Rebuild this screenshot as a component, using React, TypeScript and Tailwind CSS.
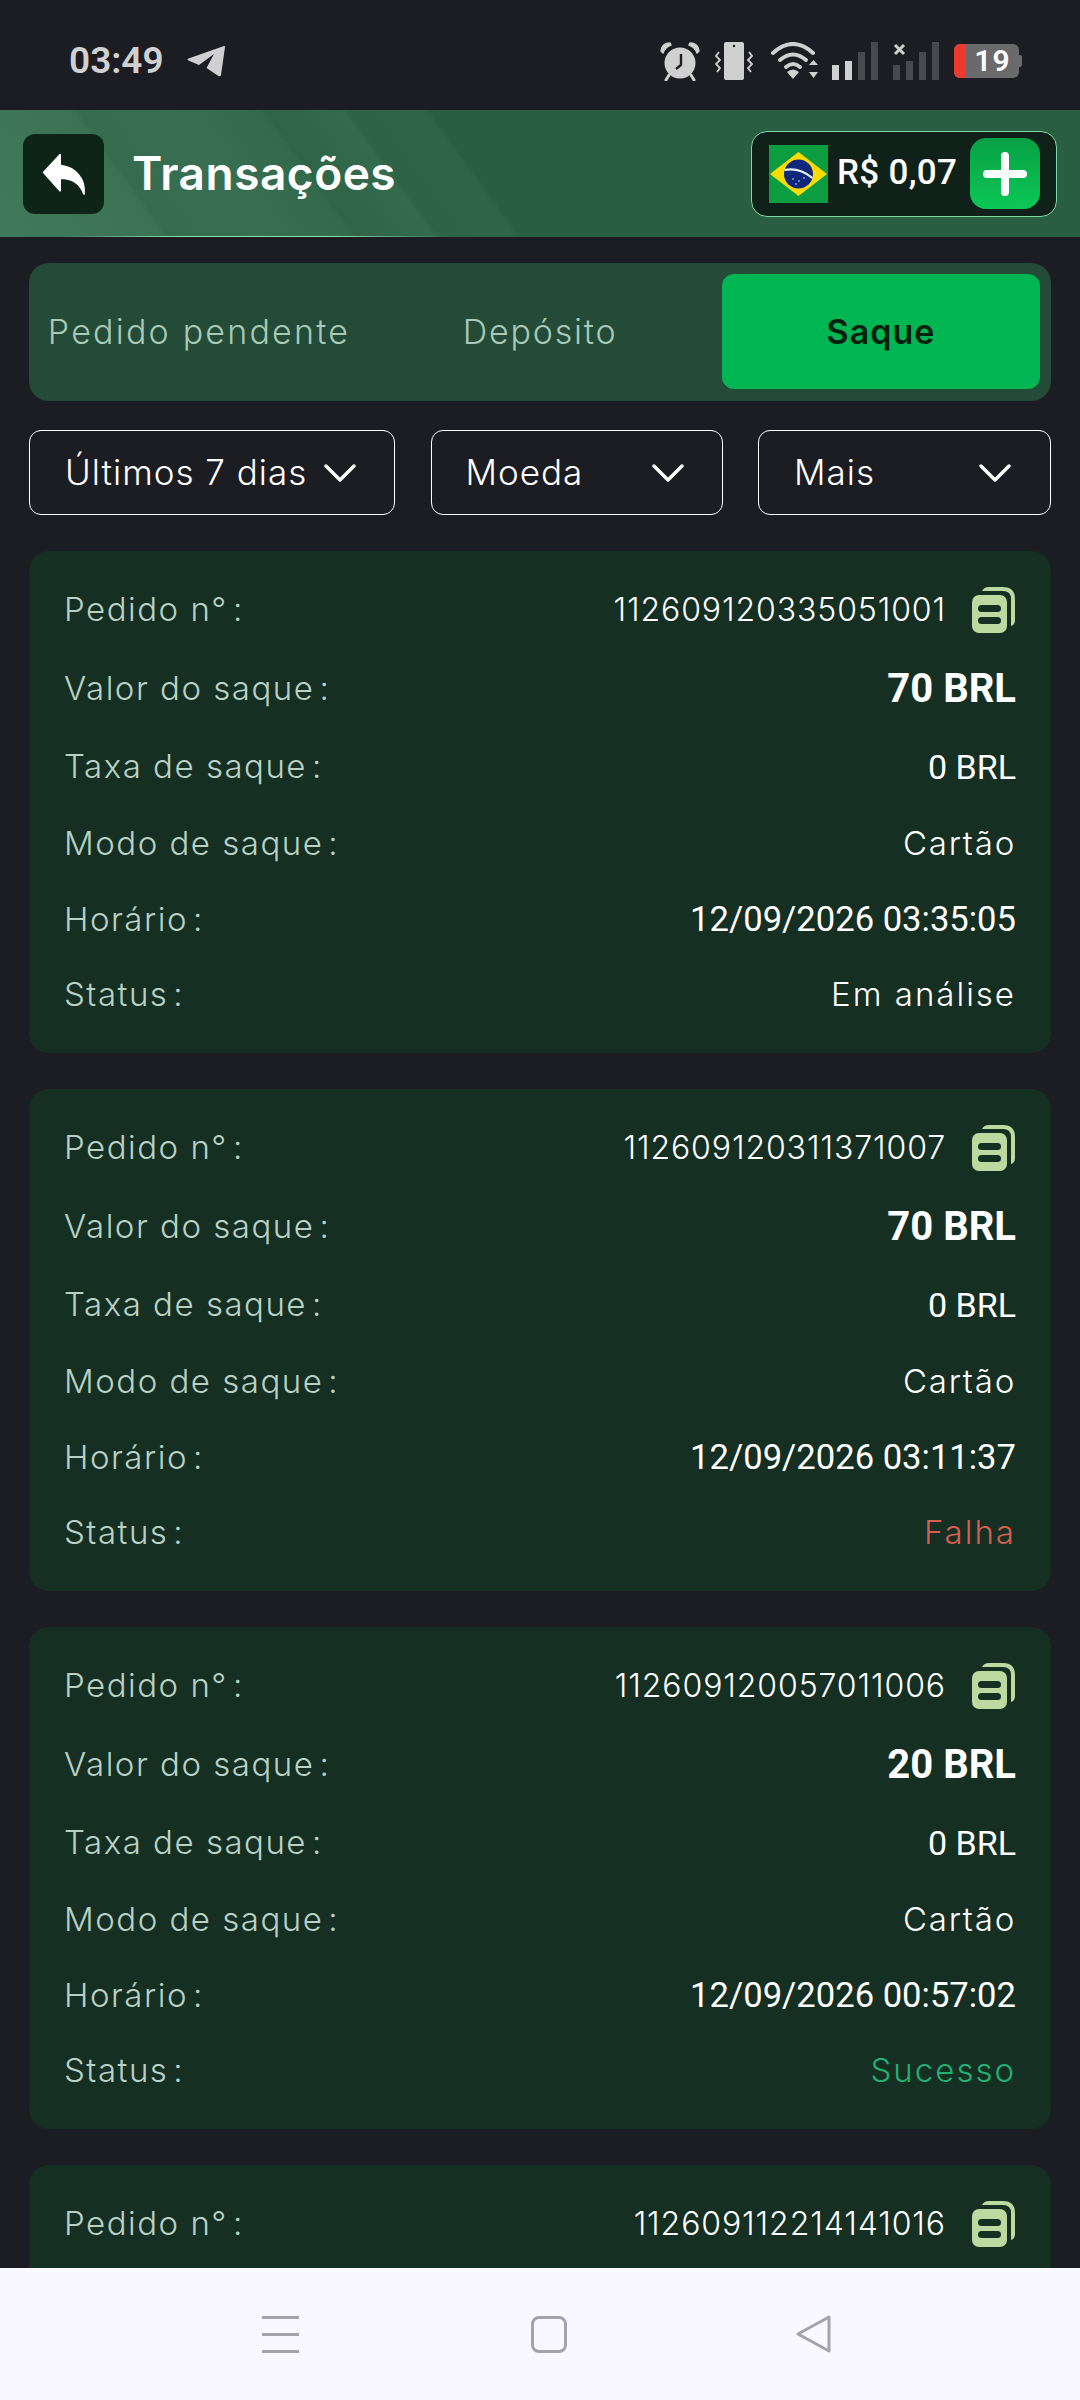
import React from "react";

interface ITransaction {
  orderNo: string;
  amount?: string;
  time?: string;
  status?: string;
  statusClass?: string;
}

const transactions: ITransaction[] = [
  {
    orderNo: "112609120335051001",
    amount: "70 BRL",
    time: "12/09/2026 03:35:05",
    status: "Em análise",
    statusClass: "text-white",
  },
  {
    orderNo: "112609120311371007",
    amount: "70 BRL",
    time: "12/09/2026 03:11:37",
    status: "Falha",
    statusClass: "text-[#d65f50]",
  },
  {
    orderNo: "112609120057011006",
    amount: "20 BRL",
    time: "12/09/2026 00:57:02",
    status: "Sucesso",
    statusClass: "text-[#22b074]",
  },
  // only the first row of this one shows above the nav bar
  { orderNo: "112609112214141016" },
];

const Chevron = () => (
  <svg width="32" height="20" viewBox="0 0 32 20" fill="none">
    <path d="M2 3 L16 17 L30 3" stroke="white" strokeWidth="3.4" strokeLinecap="round" strokeLinejoin="round" />
  </svg>
);

const BackArrow = () => (
  <svg width="46" height="44" viewBox="110 445 145 140">
    <path
      d="M118 510 L170 454 V488 C220 494 250 532 246 578 C234 545 205 528 170 528 V568 Z"
      fill="white"
      stroke="white"
      strokeWidth="6"
      strokeLinejoin="round"
    />
  </svg>
);

const CopyIcon = () => (
  <svg width="44" height="46" viewBox="0 0 44 46">
    <path d="M10 4 Q12 0 17 0 H31 Q43 0 43 12 V33 Q43 38 39 39 V12 Q39 4 31 4 Z" fill="#bcd9a0" />
    <rect x="0" y="8" width="35" height="38" rx="7" fill="#bcd9a0" />
    <rect x="6" y="18" width="23" height="7" rx="3.5" fill="#152f23" />
    <rect x="6" y="30" width="23" height="7" rx="3.5" fill="#152f23" />
  </svg>
);

const Flag = () => (
  <svg width="59" height="58" viewBox="0 0 59 58">
    <rect width="59" height="58" fill="#0b9d40" />
    <path d="M29.5 7 L58 29 L29.5 51 L1 29 Z" fill="#fcdc00" />
    <circle cx="29.5" cy="29" r="14.5" fill="#10287c" />
    <path d="M15.5 25 Q30 22 43.5 33" stroke="#e8eef0" strokeWidth="2.2" fill="none" />
    <circle cx="24" cy="34" r="0.8" fill="#dfe8ff" />
    <circle cx="30" cy="36" r="0.8" fill="#dfe8ff" />
    <circle cx="35" cy="33" r="0.8" fill="#dfe8ff" />
    <circle cx="27" cy="39" r="0.8" fill="#dfe8ff" />
  </svg>
);

const TelegramIcon = () => (
  <svg width="38" height="32" viewBox="0 0 38 32">
    <path d="M37 1 Q38 0.5 38 2 L34 30 Q33.5 32 31.5 31 L19.5 23 L27 9 L12 20 L1.5 15.5 Q-0.5 14.5 1.5 13.5 Z" fill="#d0d0d0" />
  </svg>
);

const AlarmIcon = () => (
  <svg width="40" height="39" viewBox="0 0 40 39">
    <path d="M1 9 Q2 1 10 1 L11 3 Q5 5 3 11 Z M39 9 Q38 1 30 1 L29 3 Q35 5 37 11 Z" fill="#d0d0d0" stroke="#d0d0d0" strokeWidth="1.5" strokeLinejoin="round" />
    <circle cx="20" cy="21" r="15.5" fill="#d0d0d0" />
    <path d="M9 33 L6 38 M31 33 L34 38" stroke="#d0d0d0" strokeWidth="3" strokeLinecap="round" />
    <path d="M21 12 V23 L16 27" stroke="#1c1d22" strokeWidth="2.4" fill="none" />
  </svg>
);

const VibrateIcon = () => (
  <svg className="ml-[2px]" width="38" height="38" viewBox="0 0 38 38">
    <rect x="9" y="0" width="20" height="38" rx="2" fill="#d0d0d0" />
    <circle cx="19" cy="4" r="1.2" fill="#1c1d22" />
    <path d="M4 10 L1 14 L5 18 L1 22 L5 26 L2 30" stroke="#d0d0d0" strokeWidth="1.8" fill="none" />
    <path d="M34 10 L37 14 L33 18 L37 22 L33 26 L36 30" stroke="#d0d0d0" strokeWidth="1.8" fill="none" />
  </svg>
);

const WifiIcon = () => (
  <svg className="ml-[5px]" width="48" height="38" viewBox="0 0 48 38">
    <path d="M2 11 Q22 -7 42 11" stroke="#d0d0d0" strokeWidth="4" fill="none" strokeLinecap="round" />
    <path d="M9 18 Q22 7 35 18" stroke="#d0d0d0" strokeWidth="4" fill="none" strokeLinecap="round" />
    <path d="M15 25 Q22 19 29 25 " stroke="#d0d0d0" strokeWidth="4" fill="none" strokeLinecap="round" />
    <path d="M16 30 Q22 25 28 30 L22 37 Z" fill="#d0d0d0" />
    <path d="M38 23 L42.5 18 L47 23 Z M38 30 H47 L42.5 36 Z" fill="#d0d0d0" />
  </svg>
);

const SignalIcon = () => (
  <svg width="48" height="38" viewBox="0 0 48 38">
    <rect x="0" y="23" width="7" height="15" fill="#d0d0d0" />
    <rect x="13" y="19" width="7" height="19" fill="#d0d0d0" />
    <rect x="26" y="10" width="7" height="28" fill="#48494d" />
    <rect x="39" y="0" width="7" height="38" fill="#48494d" />
  </svg>
);

const NoSignalIcon = () => (
  <svg width="48" height="38" viewBox="0 0 48 38">
    <path d="M2 3 L11 12 M11 3 L2 12" stroke="#d0d0d0" strokeWidth="3" />
    <rect x="0" y="23" width="7" height="15" fill="#48494d" />
    <rect x="13" y="19" width="7" height="19" fill="#48494d" />
    <rect x="26" y="10" width="7" height="28" fill="#48494d" />
    <rect x="39" y="0" width="7" height="38" fill="#48494d" />
  </svg>
);

const Battery = () => (
  <div className="flex items-center">
    <div className="flex h-[34px] w-[65px] items-center rounded-[6px] bg-[#6a6a6d]">
      <div className="h-full w-[12px] rounded-l-[6px] bg-[#ee3a2e]" />
      <span className="flex-1 text-center font-[Roboto,sans-serif] text-[30px] leading-[34px] font-semibold tracking-[1px] text-white">19</span>
    </div>
    <div className="h-[12px] w-[3px] rounded-r-[2px] bg-[#6a6a6d]" />
  </div>
);

const Row = ({ label, children, className }: { label: string; children: React.ReactNode; className: string }) => (
  <div className={`flex items-center justify-between ${className}`}>
    <span className="text-[33px] font-light tracking-[1.5px] text-[#b9d1c4]">
      {label}
      <span className="ml-[5px]">:</span>
    </span>
    {children}
  </div>
);

const TransactionCard = ({ orderNo, amount, time, status, statusClass }: ITransaction) => (
  <div className="flex h-[502px] shrink-0 flex-col rounded-[20px] bg-[#152f23] px-[35px] pt-[20px]">
    <Row label="Pedido n°" className="h-[78px]">
      <div className="flex items-center gap-[26px]">
        <span className="text-[32px] font-light tracking-[0.9px] text-white">{orderNo}</span>
        <CopyIcon />
      </div>
    </Row>
    {amount && (
      <>
        <Row label="Valor do saque" className="h-[79px]">
          <span className="font-[Roboto,sans-serif] text-[40px] font-bold text-white">{amount}</span>
        </Row>
        <Row label="Taxa de saque" className="h-[78px]">
          <span className="font-[Roboto,sans-serif] text-[34px] text-white">0 BRL</span>
        </Row>
        <Row label="Modo de saque" className="h-[76px]">
          <span className="text-[33px] font-light tracking-[1.8px] text-white">Cartão</span>
        </Row>
        <Row label="Horário" className="h-[75px]">
          <span className="font-[Roboto,sans-serif] text-[34.6px] text-white">{time}</span>
        </Row>
        <Row label="Status" className="h-[75px]">
          <span className={`text-[33px] font-light tracking-[2px] ${statusClass}`}>{status}</span>
        </Row>
      </>
    )}
  </div>
);

const FilterButton = ({ label, className }: { label: string; className: string }) => (
  <button className={`flex h-[85px] items-center justify-between rounded-[12px] border border-white ${className}`}>
    <span className="text-[35px] font-light tracking-[1px] text-white">{label}</span>
    <Chevron />
  </button>
);

export default function App() {
  return (
    <div className="flex h-[2400px] w-[1080px] flex-col overflow-hidden bg-[#1c1d22] font-[Inter,sans-serif]">
      <div className="flex h-[110px] shrink-0 items-center justify-between pt-[12px] pr-[58px] pl-[69px]">
        <div className="flex items-center gap-[23px]">
          <span className="font-[Roboto,sans-serif] text-[37px] font-semibold text-[#d0d0d0]">03:49</span>
          <TelegramIcon />
        </div>
        <div className="flex items-center gap-[13px]">
          <AlarmIcon />
          <VibrateIcon />
          <WifiIcon />
          <SignalIcon />
          <NoSignalIcon />
          <Battery />
        </div>
      </div>

      <div className="relative flex h-[127px] shrink-0 items-center justify-between bg-[linear-gradient(54deg,#417a5b_0%,#3b7255_14%,#356b4e_14.5%,#386f52_22%,#336a4c_30%,#2f6447_30.5%,#346a4d_37%,#2e6347_37.5%,#2f6448_44%,#2a5e43_44.5%,#2a5e43_100%)] px-[23px]">
        <div className="flex items-center gap-[28px]">
          <button className="flex h-[80px] w-[81px] items-center justify-center rounded-[12px] bg-[#0e2417]">
            <BackArrow />
          </button>
          <h1 className="text-[46px] font-semibold tracking-[0.5px] text-white">Transações</h1>
        </div>
        <div className="flex h-[86px] w-[306px] items-center rounded-[16px] border border-[#7fd8a4] bg-[#0f2118] pr-[16px] pl-[17px]">
          <Flag />
          <span className="ml-[9px] font-[Roboto,sans-serif] text-[35px] font-medium tracking-[0.3px] text-white">R$ 0,07</span>
          <button className="ml-auto flex h-[71px] w-[70px] items-center justify-center rounded-[16px] bg-[linear-gradient(180deg,#07a044,#0cc757)]">
            <svg width="44" height="44" viewBox="0 0 44 44">
              <path d="M22 4 V40 M4 22 H40" stroke="white" strokeWidth="8" strokeLinecap="round" />
            </svg>
          </button>
        </div>
        <div className="absolute right-[630px] bottom-0 left-[60px] h-[1px] bg-[linear-gradient(90deg,transparent,#8be0b0_30%,#8be0b0_70%,transparent)]" />
      </div>

      <div className="flex min-h-0 flex-1 flex-col overflow-hidden px-[29px] pt-[26px]">
        <div className="grid h-[138px] shrink-0 grid-cols-[318px_364px_318px] items-center rounded-[20px] bg-[#234b37] px-[11px] pb-[2px]">
          <span className="text-center text-[34px] font-light tracking-[2.2px] text-[#a8c9b6]">Pedido pendente</span>
          <span className="text-center text-[34px] font-light tracking-[1.8px] text-[#a8c9b6]">Depósito</span>
          <button className="h-[115px] rounded-[12px] bg-[#00b652] text-[34px] font-semibold tracking-[1px] text-[#04200f]">Saque</button>
        </div>

        <div className="mt-[29px] flex shrink-0 justify-between">
          <FilterButton label="Últimos 7 dias" className="w-[366px] pr-[38px] pl-[35px]" />
          <FilterButton label="Moeda" className="w-[292px] pr-[38px] pl-[34px]" />
          <FilterButton label="Mais" className="w-[293px] pr-[39px] pl-[35px]" />
        </div>

        <div className="mt-[36px] flex flex-col gap-[36px]">
          {transactions.map((item) => (
            <TransactionCard key={item.orderNo} {...item} />
          ))}
        </div>
      </div>

      <div className="flex h-[132px] shrink-0 items-center bg-[#f8f8fe] pl-[262px]">
        <div className="flex h-[37px] w-[37px] flex-col justify-between">
          <div className="h-[3px] bg-[#a3a3ab]" />
          <div className="h-[3px] bg-[#a3a3ab]" />
          <div className="h-[3px] bg-[#a3a3ab]" />
        </div>
        <div className="ml-[232px] h-[37px] w-[36px] rounded-[8px] border-[3px] border-[#a3a3ab]" />
        <svg className="ml-[229px]" width="36" height="38" viewBox="0 0 36 38" fill="none">
          <path d="M33 2 L2 19 L33 36 Z" stroke="#a3a3ab" strokeWidth="3" strokeLinejoin="round" />
        </svg>
      </div>
    </div>
  );
}
